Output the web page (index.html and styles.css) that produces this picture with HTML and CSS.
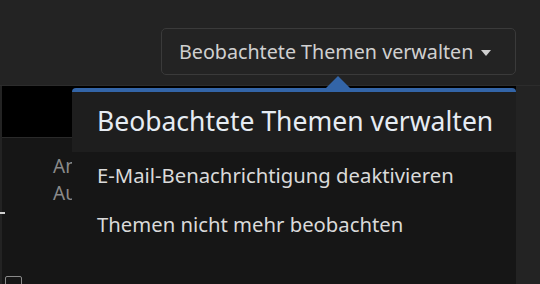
FILE: index.html
```html
<!DOCTYPE html>
<html lang="de">
<head>
    <meta charset="UTF-8">
    <meta name="viewport" content="width=device-width, initial-scale=1.0">
    <title>Themen</title>
    <link rel="stylesheet" href="styles.css">
</head>
<body>
    <div class="topbar">
        <button class="watch-btn">Beobachtete Themen verwalten <span class="caret"></span></button>
    </div>
    <div class="page">
        <div class="content">
            <div class="band"></div>
            <div class="list">
                <div class="meta">An</div>
                <div class="meta">Au</div>
                <span class="tick"></span>
                <span class="check"></span>
            </div>
        </div>
    </div>

    <div class="dropdown">
        <span class="arrow"></span>
        <div class="dropdown-head">Beobachtete Themen verwalten</div>
        <ul class="dropdown-menu">
            <li>E-Mail-Benachrichtigung deaktivieren</li>
            <li>Themen nicht mehr beobachten</li>
        </ul>
    </div>
</body>
</html>
```

FILE: styles.css
```css
body { margin: 0; background: #232323; font-family: "Noto Sans", sans-serif; height: 284px; overflow: hidden; position: relative; }
.topbar { height: 86px; box-sizing: border-box; padding: 28px 24px 0 0; display: flex; justify-content: flex-end; align-items: flex-start; border-bottom: 1px solid #2c2c2c; }
.watch-btn { height: 47px; width: 355px; box-sizing: border-box; background: #232323; border: 1px solid #3a3a3a; border-radius: 5px; color: #d0d0d0; font-family: "Noto Sans", sans-serif; font-size: 19.7px; padding: 0 0 0 17px; text-align: left; display: flex; align-items: center; gap: 8px; }
.caret { width: 0; height: 0; border-left: 5.5px solid transparent; border-right: 5.5px solid transparent; border-top: 6px solid #d0d0d0; margin-top: 2px; }
.page { display: flex; padding-left: 2px; }
.content { width: 514px; height: 200px; background: #161616; }
.band { height: 51px; background: #000; border-bottom: 1px solid #2a2a2a; }
.list { position: relative; padding: 15px 0 0 51px; height: 146px; box-sizing: border-box; border-right: 1px solid #3a3a3a; }
.meta { color: #8a8a8a; font-size: 19px; line-height: 27px; }
.tick { position: absolute; left: -2px; top: 74px; width: 5px; height: 2px; background: #cfcfcf; }
.check { position: absolute; left: 3px; top: 138px; width: 15px; height: 15px; border: 1px solid #8a8a8a; border-radius: 2px; }
.dropdown { position: absolute; left: 72px; top: 88px; width: 444px; height: 200px; background: #161616; border-top: 4px solid #3365a8; border-radius: 4px 4px 0 0; }
.arrow { position: absolute; left: 254px; top: -16px; width: 0; height: 0; border-left: 12px solid transparent; border-right: 12px solid transparent; border-bottom: 12px solid #3365a8; }
.dropdown-head { height: 60px; box-sizing: border-box; padding: 0 25px; background: #1e1e1e; color: #e6ecf3; font-size: 26.5px; line-height: 58px; white-space: nowrap; }
.dropdown-menu { list-style: none; margin: 0; padding: 10px 25px 0; }
.dropdown-menu li { color: #dadada; font-size: 20.3px; line-height: 26px; padding: 0; margin-bottom: 23px; white-space: nowrap; }
```
